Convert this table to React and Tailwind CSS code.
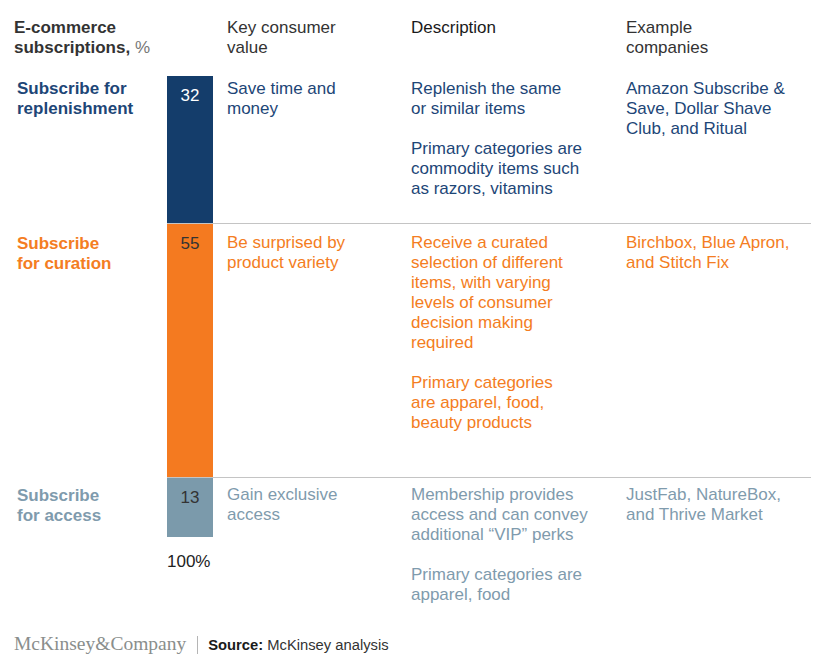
import React from 'react';

const rows = [
  {
    key: 'replenishment',
    label: ['Subscribe for', 'replenishment'],
    value: 32,
    barHeight: 'h-[147px]',
    rowHeight: 'h-[148px] border-b border-[#c4c4c4]',
    bar: 'bg-[#143d6b] text-white',
    text: 'text-[#1d4677]',
    labelPad: 'pt-[3px]',
    textPad: 'pt-[3px]',
    valueText: ['Save time and', 'money'],
    description: [
      ['Replenish the same', 'or similar items'],
      ['Primary categories are', 'commodity items such', 'as razors, vitamins'],
    ],
    companies: ['Amazon Subscribe &', 'Save, Dollar Shave', 'Club, and Ritual'],
  },
  {
    key: 'curation',
    label: ['Subscribe', 'for curation'],
    value: 55,
    barHeight: 'h-[253px]',
    rowHeight: 'h-[254px] border-b border-[#c4c4c4]',
    bar: 'bg-[#f47a20] text-[#333]',
    text: 'text-[#f47d22]',
    labelPad: 'pt-[10px]',
    textPad: 'pt-[9px]',
    valueText: ['Be surprised by', 'product variety'],
    description: [
      ['Receive a curated', 'selection of different', 'items, with varying', 'levels of consumer', 'decision making', 'required'],
      ['Primary categories', 'are apparel, food,', 'beauty products'],
    ],
    companies: ['Birchbox, Blue Apron,', 'and Stitch Fix'],
  },
  {
    key: 'access',
    label: ['Subscribe', 'for access'],
    value: 13,
    barHeight: 'h-[59px]',
    rowHeight: '',
    bar: 'bg-[#7b9aab] text-[#333]',
    text: 'text-[#7f9bad]',
    labelPad: 'pt-[8px]',
    textPad: 'pt-[7px]',
    valueText: ['Gain exclusive', 'access'],
    description: [
      ['Membership provides', 'access and can convey', 'additional \u201cVIP\u201d perks'],
      ['Primary categories are', 'apparel, food'],
    ],
    companies: ['JustFab, NatureBox,', 'and Thrive Market'],
  },
];

const Lines = ({ lines }) => (
  <p className="whitespace-nowrap">
    {lines.map((line, i) => (
      <React.Fragment key={i}>
        {i > 0 && <br />}
        {line}
      </React.Fragment>
    ))}
  </p>
);

function Row({ row, last }) {
  return (
    <div className="flex">
      <div className={`w-[167px] pl-[17px] font-semibold ${row.text} ${row.labelPad}`}>
        <Lines lines={row.label} />
      </div>
      <div className={`flex w-[644px] ${row.rowHeight}`}>
        <div className="flex w-[46px] shrink-0 flex-col">
          <div className={`${row.barHeight} ${row.bar} pt-[10px] text-center`}>{row.value}</div>
          {last && <div className="mt-[15px] text-[#222]">100%</div>}
        </div>
        <div className={`w-[184px] pl-[14px] ${row.text} ${row.textPad}`}>
          <Lines lines={row.valueText} />
        </div>
        <div className={`w-[215px] space-y-[20px] pl-[14px] ${row.text} ${row.textPad}`}>
          {row.description.map((para, i) => (
            <Lines key={i} lines={para} />
          ))}
        </div>
        <div className={`w-[199px] pl-[14px] ${row.text} ${row.textPad}`}>
          <Lines lines={row.companies} />
        </div>
      </div>
    </div>
  );
}

export default function App() {
  return (
    <div
      className="h-[664px] w-[831px] bg-white pt-[18px] text-[17px] leading-[20px]"
      style={{ fontFamily: '"Liberation Sans", Arial, sans-serif' }}
    >
      <div className="flex h-[58px]">
        <div className="w-[213px] pl-[14px] text-[#333]">
          <span className="font-semibold">E-commerce</span>
          <br />
          <span className="font-semibold">subscriptions,</span> <span className="text-[#777]">%</span>
        </div>
        <div className="w-[184px] pl-[14px] text-[#333]">
          Key consumer
          <br />
          value
        </div>
        <div className="w-[215px] pl-[14px] text-[#1a1a1a]">Description</div>
        <div className="w-[199px] pl-[14px] text-[#333]">
          Example
          <br />
          companies
        </div>
      </div>

      {rows.map((row, i) => (
        <Row key={row.key} row={row} last={i === rows.length - 1} />
      ))}

      <div className="mt-[27px] flex items-baseline pl-[14px]">
        <span
          className="text-[19.5px] leading-[24px] text-[#8a8e8c]"
          style={{ fontFamily: '"Liberation Serif", "Times New Roman", serif' }}
        >
          McKinsey&amp;Company
        </span>
        <span className="ml-[11px] border-l border-[#b5b5b5] pl-[10px] text-[14.75px] leading-[18px] text-[#333]">
          <span className="font-semibold text-[#1a1a1a]">Source:</span> McKinsey analysis
        </span>
      </div>
    </div>
  );
}
